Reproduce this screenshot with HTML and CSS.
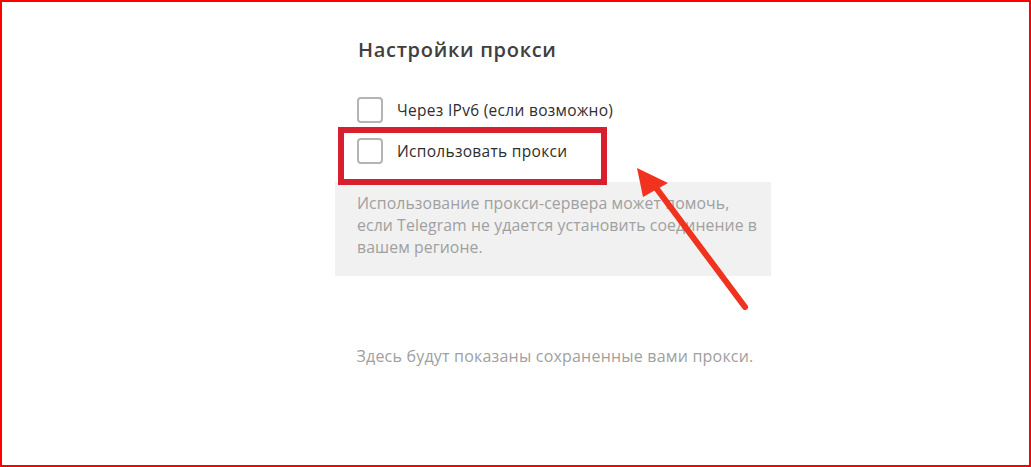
FILE: index.html
```html
<!DOCTYPE html>
<html lang="ru">
<head>
<meta charset="utf-8">
<title>Настройки прокси</title>
<link rel="stylesheet" href="styles.css">
</head>
<body>
<div class="frame">
  <div class="panel">
    <h2 class="title">Настройки прокси</h2>
    <div class="options">
      <label class="row"><span class="box"></span><span class="label">Через IPv6 (если возможно)</span></label>
      <label class="row"><span class="box"></span><span class="label">Использовать прокси</span></label>
    </div>
    <div class="about">Использование прокси-сервера может помочь, если Telegram не удается установить соединение в вашем регионе.</div>
    <p class="empty">Здесь будут показаны сохраненные вами прокси.</p>
  </div>
  <div class="highlight"></div>
  <svg class="arrow" width="140" height="160" viewBox="0 0 140 160">
    <line x1="125" y1="157" x2="28" y2="27" stroke="#f0321f" stroke-width="6" stroke-linecap="round"/>
    <polygon points="17,18 48,33 23,47" fill="#f0321f"/>
  </svg>
</div>
</body>
</html>
```

FILE: styles.css
```css
* { box-sizing: border-box; }
html, body { margin: 0; padding: 0; background: #fff; }
body { font-family: "Open Sans", "Noto Sans", sans-serif; }
.frame {
  position: relative;
  width: 1031px;
  height: 467px;
  border: 2px solid #ff0000;
  overflow: hidden;
}
.panel {
  width: 436px;
  margin-left: 333px;
  padding-top: 35px;
}
.title {
  margin: 0 0 0 23px;
  font-size: 20px;
  font-weight: 600;
  line-height: 26px;
  letter-spacing: 0.7px;
  color: #404040;
}
.options {
  display: flex;
  flex-direction: column;
  gap: 15px;
  margin-top: 34px;
  padding-left: 22px;
}
.row {
  display: flex;
  align-items: center;
  gap: 14px;
  height: 26px;
}
.box {
  width: 26px;
  height: 26px;
  border: 2px solid #b4b4b4;
  border-radius: 4px;
  background: #fff;
}
.label {
  font-size: 15.5px;
  letter-spacing: 0.3px;
  color: #2e2e2e;
}
.about {
  margin-top: 18px;
  background: #f1f1f1;
  padding: 10px 8px 18px 22px;
  font-size: 15.8px;
  line-height: 22px;
  letter-spacing: 0.1px;
  color: #a0a0a0;
}
.empty {
  margin: 69px 0 0 0;
  text-align: center;
  padding-left: 4px;
  font-size: 16px;
  line-height: 22px;
  letter-spacing: 0.2px;
  color: #a0a0a0;
}
.highlight {
  position: absolute;
  left: 336px;
  top: 125px;
  width: 269px;
  height: 58px;
  border: 6px solid #d7202e;
}
.arrow {
  position: absolute;
  left: 618px;
  top: 148px;
}
```
